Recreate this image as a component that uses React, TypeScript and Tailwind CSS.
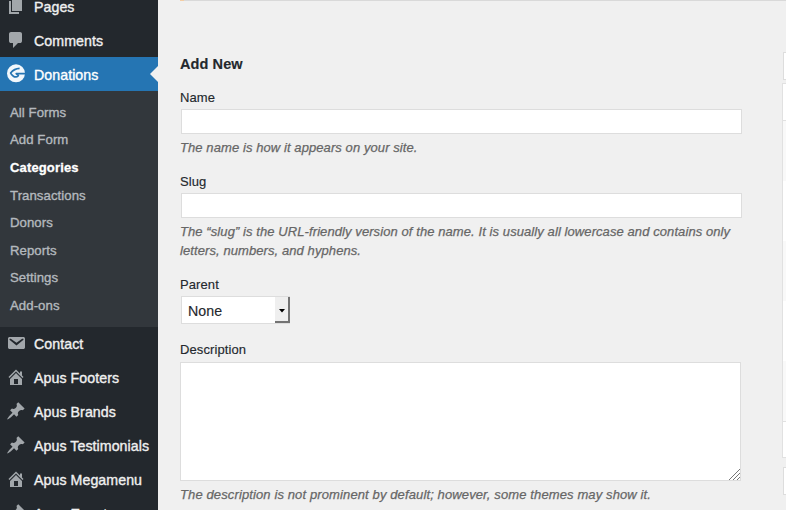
import type { ReactNode } from "react";

const paths = {
  page: "M6 15V2h10v13H6zm-1 1h8v2H3V5h2v11z",
  comment:
    "M5 2h9q.82 0 1.41.59T16 4v7q0 .82-.59 1.41T14 13h-2l-5 5v-5H5q-.82 0-1.41-.59T3 11V4q0-.82.59-1.41T5 2z",
  email:
    "M3.87 4h13.25C18.37 4 19 4.59 19 5.79v8.42c0 1.19-.63 1.79-1.88 1.79H3.87c-1.25 0-1.88-.6-1.88-1.79V5.79c0-1.2.63-1.79 1.88-1.79zm6.62 8.6l6.74-5.53c.24-.2.43-.66.13-1.07-.29-.41-.82-.42-1.17-.17l-5.7 3.86L4.8 5.83c-.35-.25-.88-.24-1.17.17-.3.41-.11.87.13 1.07z",
  home: "M16 8.5l1.53 1.53-1.06 1.06L10 4.6l-6.47 6.49-1.06-1.06L10 2.5l4 4v-2h2v4zm-6-2.46l6 5.99V18H4v-5.97zM12 17v-5H8v5h4z",
  pin: "M10.44 3.02l1.82-1.82 6.36 6.35-1.83 1.82c-1.05-.68-2.48-.57-3.41.36l-.75.75c-.92.93-1.04 2.35-.35 3.41l-1.83 1.82-2.41-2.41-2.8 2.79c-.42.42-3.38 2.71-3.8 2.29s1.86-3.39 2.28-3.81l2.79-2.79L4.1 9.36l1.83-1.82c1.05.69 2.48.57 3.4-.36l.75-.75c.93-.92 1.05-2.35.36-3.41z",
};

function GiveIcon() {
  return (
    <svg viewBox="0 0 20 20" className="size-5 shrink-0">
      <circle cx="10" cy="9.3" r="9" fill="#f2f8fc" />
      <path
        d="M19.2 9.6H10.2L12.4 11.6C11.4 13.2 9 13.4 7.4 12.2C6 11.2 5 10.2 4.6 9C6.6 6.6 9.6 4.6 13.6 4.4"
        fill="none"
        stroke="#2575b3"
        strokeWidth="1.7"
        strokeLinejoin="round"
      />
    </svg>
  );
}

function MenuItem({ icon, label }: { icon: keyof typeof paths; label: string }) {
  return (
    <a className="flex h-[34px] items-center gap-[8px] pl-[6px] text-[#f0f0f0]">
      <svg viewBox="0 0 20 20" className="-mt-[2px] size-5 shrink-0 fill-[#a2a7ab]">
        <path fillRule="evenodd" d={paths[icon]} />
      </svg>
      <span className="pt-px">{label}</span>
    </a>
  );
}

const submenu = ["All Forms", "Add Form", "Categories", "Transactions", "Donors", "Reports", "Settings", "Add-ons"];

function Sidebar() {
  return (
    <nav className="h-[510px] w-[158px] shrink-0 overflow-hidden bg-[#23282d] text-[14.2px] tracking-[0.06px] whitespace-nowrap [-webkit-text-stroke:0.35px]">
      <div className="-mt-[10px]">
        <MenuItem icon="page" label="Pages" />
        <MenuItem icon="comment" label="Comments" />
        <a className="-mt-px flex h-[34px] items-center gap-[8px] bg-[#2575b3] pl-[6px] text-white">
          <GiveIcon />
          <span className="grow pt-[3px]">Donations</span>
          <svg viewBox="0 0 8 16" className="h-4 w-2 fill-[#f0f0f0]">
            <path d="M8 0 0 8l8 8z" />
          </svg>
        </a>
        <div className="h-[236px] bg-[#32373c] pt-[8px] pl-[10px] text-[13.2px]">
          {submenu.map((s) => (
            <a
              key={s}
              className={
                s === "Categories"
                  ? "flex h-[27.6px] items-center text-[13px] font-bold tracking-[0.15px] text-white [-webkit-text-stroke:0.3px]"
                  : "flex h-[27.6px] items-center text-[#b4b9be]"
              }
            >
              {s}
            </a>
          ))}
        </div>
        <MenuItem icon="email" label="Contact" />
        <MenuItem icon="home" label="Apus Footers" />
        <MenuItem icon="pin" label="Apus Brands" />
        <MenuItem icon="pin" label="Apus Testimonials" />
        <MenuItem icon="home" label="Apus Megamenu" />
        <MenuItem icon="pin" label="Apus Events" />
      </div>
    </nav>
  );
}

function Hint({ children }: { children: ReactNode }) {
  return (
    <p className="text-[13px] leading-[19px] tracking-[0.085px] whitespace-nowrap text-[#666] italic [-webkit-text-stroke:0.25px]">
      {children}
    </p>
  );
}

function Form() {
  return (
    <form className="mt-[52px] w-[562px] text-[13px] leading-5 tracking-[0.1px] text-[#23282d] [-webkit-text-stroke:0.15px]">
      <h2 className="h-[22px] text-[14.5px] leading-[22px] font-bold">Add New</h2>
      <div className="mt-[13px] h-5">Name</div>
      <div className="mt-px ml-px h-[25px] border border-[#ddd] bg-white" />
      <div className="mt-1">
        <Hint>The name is how it appears on your site.</Hint>
      </div>
      <div className="mt-[15px] h-5">Slug</div>
      <div className="mt-px ml-px h-[25px] border border-[#ddd] bg-white" />
      <div className="mt-1">
        <Hint>
          The “slug” is the URL-friendly version of the name. It is usually all lowercase and contains only
          <br />
          letters, numbers, and hyphens.
        </Hint>
      </div>
      <div className="mt-[15px] h-5">Parent</div>
      <div className="mt-px ml-px flex h-[28px] w-[109px] border border-[#ddd] bg-white">
        <span className="grow pl-[6px] text-[14.2px] leading-[28px]">None</span>
        <span className="-mr-px flex w-[15px] items-center justify-center border-r-2 border-b-2 border-[#737373] bg-[#efefef] pt-[3px]">
          <svg viewBox="0 0 6 4" className="h-[4px] w-[6px]">
            <path d="M0 0h6L3 3.6z" />
          </svg>
        </span>
      </div>
      <div className="mt-[16px] h-5">Description</div>
      <div className="mt-[2px] flex h-[119px] w-[561px] items-end justify-end border border-[#ddd] bg-white">
        <svg viewBox="0 0 11 11" className="size-[11px]" fill="none" stroke="#777" strokeWidth="1">
          <path d="M0 11 11 0M4 11l7-7M8 11l3-3" />
        </svg>
      </div>
      <div className="mt-1">
        <Hint>
          <span className="tracking-[0.12px]">
            The description is not prominent by default; however, some themes may show it.
          </span>
        </Hint>
      </div>
    </form>
  );
}

function ListEdge() {
  return (
    <div className="ml-auto w-[4px] shrink-0 overflow-hidden pt-[51px]">
      <div className="ml-px h-[28px] border border-r-0 border-[#ddd] bg-white" />
      <div className="mt-[3px] h-[375px] border border-r-0 border-[#e1e1e1] bg-white">
        <div className="h-[37px] border-b border-[#e1e1e1]" />
        <div className="h-[60px] bg-[#f9f9f9]" />
        <div className="h-[60px]" />
        <div className="h-[60px] bg-[#f9f9f9]" />
        <div className="h-[60px]" />
        <div className="h-[60px] bg-[#f9f9f9]" />
        <div className="border-b border-[#e1e1e1]" />
      </div>
      <div className="mt-[9px] ml-px h-[28px] border border-r-0 border-[#ddd] bg-white" />
    </div>
  );
}

export default function App() {
  return (
    <div className="flex h-[510px] w-[786px] overflow-hidden bg-[#f0f0f0] font-['Liberation_Sans',Arial,sans-serif]">
      <Sidebar />
      <main className="flex min-w-0 grow flex-col pl-[22px]">
        <div className="flex h-px shrink-0 bg-[#d9d9d9]">
          <span className="w-[4px] bg-[#f3cda4]" />
        </div>
        <div className="flex min-h-0 grow">
          <Form />
          <ListEdge />
        </div>
      </main>
    </div>
  );
}
